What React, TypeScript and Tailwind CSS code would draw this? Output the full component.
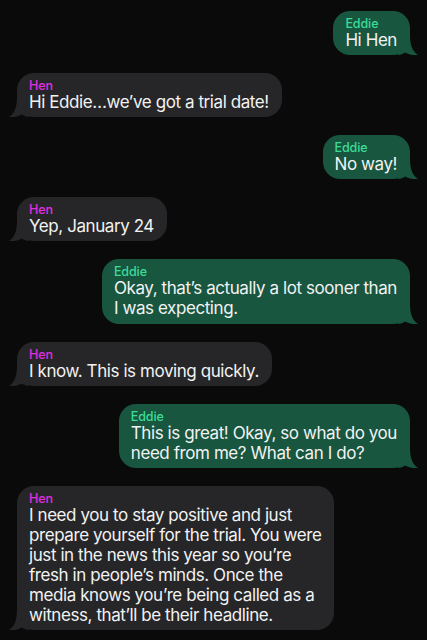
import type { ReactNode } from 'react';

type Message = {
  from: 'Eddie' | 'Hen';
  lines: string[];
};

const messages: Message[] = [
  { from: 'Eddie', lines: ['Hi Hen'] },
  { from: 'Hen', lines: ['Hi Eddie…we’ve got a trial date!'] },
  { from: 'Eddie', lines: ['No way!'] },
  { from: 'Hen', lines: ['Yep, January 24'] },
  { from: 'Eddie', lines: ['Okay, that’s actually a lot sooner than', 'I was expecting.'] },
  { from: 'Hen', lines: ['I know. This is moving quickly.'] },
  { from: 'Eddie', lines: ['This is great! Okay, so what do you', 'need from me? What can I do?'] },
  {
    from: 'Hen',
    lines: [
      'I need you to stay positive and just',
      'prepare yourself for the trial. You were',
      'just in the news this year so you’re',
      'fresh in people’s minds. Once the',
      'media knows you’re being called as a',
      'witness, that’ll be their headline.',
    ],
  },
];

function Tail({ mine }: { mine: boolean }) {
  return (
    <svg
      width="20"
      height="20"
      viewBox="0 0 20 20"
      className={
        mine
          ? 'absolute -right-[8px] bottom-0 fill-[#185640]'
          : 'absolute -left-[8px] bottom-0 -scale-x-100 fill-[#262628]'
      }
    >
      <path d="M0 0 H12 C12 10 14.5 16.5 20 20 C15 20.5 10.5 19.5 7.5 17.5 C5 19 2.5 20 0 20 Z" />
    </svg>
  );
}

function Bubble({ message }: { message: Message }) {
  const mine = message.from === 'Eddie';
  let body: ReactNode = message.lines.map((line, i) => (
    <div key={i} className="whitespace-nowrap">
      {line}
    </div>
  ));

  return (
    <div className={mine ? 'flex justify-end' : 'flex justify-start'}>
      <div
        className={
          'relative rounded-[17px] pl-[12px] pr-[13px] pt-[6px] pb-[5px] ' +
          (mine ? 'bg-[#185640]' : 'bg-[#262628]')
        }
      >
        <Tail mine={mine} />
        <div className="relative">
          <div
            className={
              'text-[12.5px] leading-[13px] font-medium tracking-[-0.1px] ' +
              (mine ? 'text-[#3ddc98]' : 'text-[#e02ee0]')
            }
          >
            {message.from}
          </div>
          <div className="text-[17px] leading-[20.1px] tracking-[-0.42px] text-[#f2f2f2]">{body}</div>
        </div>
      </div>
    </div>
  );
}

export default function App() {
  return (
    <div
      className="h-[640px] overflow-hidden bg-[#0a0a0a] px-[17px] pt-[11px] flex flex-col gap-[18px]"
      style={{ fontFamily: 'Inter, "Noto Sans", sans-serif' }}
    >
      {messages.map((m, i) => (
        <Bubble key={i} message={m} />
      ))}
    </div>
  );
}
